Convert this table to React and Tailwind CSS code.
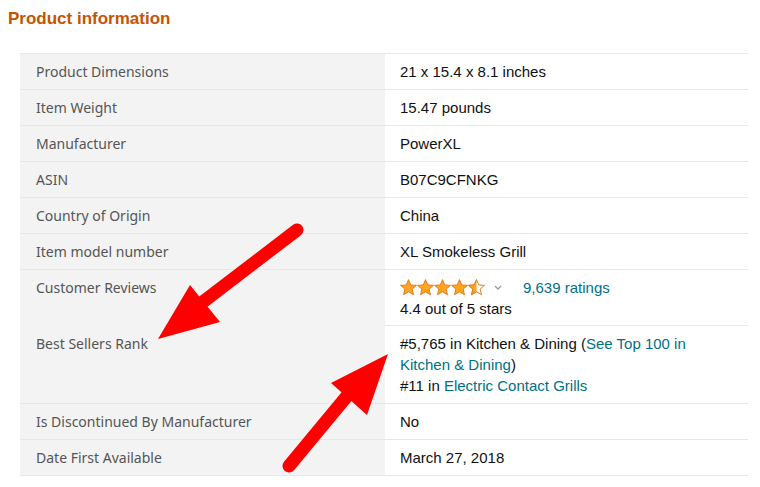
const rows = [
  ["Product Dimensions", "21 x 15.4 x 8.1 inches"],
  ["Item Weight", "15.47 pounds"],
  ["Manufacturer", "PowerXL"],
  ["ASIN", "B07C9CFNKG"],
  ["Country of Origin", "China"],
  ["Item model number", "XL Smokeless Grill"],
  ["Customer Reviews", "reviews"],
  ["Best Sellers Rank", "rank"],
  ["Is Discontinued By Manufacturer", "No"],
  ["Date First Available", "March 27, 2018"],
];

const STAR = "M8 0.6L10.1 5.6L15.5 6L11.4 9.5L12.7 14.8L8 12L3.3 14.8L4.6 9.5L0.5 6L5.9 5.6Z";

const Star = ({ half }) => (
  <svg width="17" height="17" viewBox="0 0 16 16">
    <defs>
      <clipPath id="halfclip">
        <rect x="0" y="0" width="8" height="16" />
      </clipPath>
    </defs>
    {half ? (
      <>
        <path d={STAR} fill="#fff" stroke="#de7921" strokeWidth="0.9" strokeLinejoin="round" />
        <path d={STAR} fill="#ffa41c" stroke="#de7921" strokeWidth="0.9" clipPath="url(#halfclip)" />
      </>
    ) : (
      <path d={STAR} fill="#ffa41c" stroke="#de7921" strokeWidth="0.9" strokeLinejoin="round" />
    )}
  </svg>
);

const Reviews = () => (
  <div>
    <div className="flex items-center h-[21px]">
      <div className="flex">
        <Star />
        <Star />
        <Star />
        <Star />
        <Star half />
      </div>
      <svg className="ml-[8px]" width="10" height="8" viewBox="0 0 10 8">
        <polyline points="2,2 5,5 8,2" fill="none" stroke="#999" strokeWidth="1.3" />
      </svg>
      <span className="ml-[20px] text-[#007185]">9,639 ratings</span>
    </div>
    <div>4.4 out of 5 stars</div>
  </div>
);

const Rank = () => (
  <div>
    <div>
      #5,765 in Kitchen &amp; Dining (<span className="text-[#007185]">See Top 100 in</span>
    </div>
    <div>
      <span className="text-[#007185]">Kitchen &amp; Dining</span>)
    </div>
    <div>
      #11 in <span className="text-[#007185]">Electric Contact Grills</span>
    </div>
  </div>
);

export default function App() {
  return (
    <div className="relative w-[760px] h-[487px] bg-white overflow-hidden">
      <h2 className="pl-[8px] pt-[9px] text-[17px] leading-[20px] font-bold text-[#c45500] font-['Liberation_Sans',Arial,sans-serif]">
        Product information
      </h2>

      <div className="mt-[24px] ml-[20px] w-[728px] border-t border-[#e7e7e7]">
        {rows.map(([label, value]) => (
          <div
            key={label}
            className={`grid grid-cols-[365px_1fr] border-b border-[#e7e7e7] ${
              value === "reviews" ? "h-[56px]" : ""
            }`}
          >
            <div className="bg-[#f3f3f3] pl-[16px] py-[7px] text-[14px] leading-[21px] text-[#555] font-['Noto_Sans',sans-serif]">
              {label}
            </div>
            <div className="pl-[15px] py-[7px] text-[15px] leading-[21px] text-[#0f1111] font-['Liberation_Sans',Arial,sans-serif]">
              {value === "reviews" ? <Reviews /> : value === "rank" ? <Rank /> : value}
            </div>
          </div>
        ))}
      </div>

      {/* annotation arrows */}
      <svg className="absolute left-0 top-0 pointer-events-none" width="760" height="487">
        <line x1="297" y1="230" x2="195" y2="308" stroke="#ff0000" strokeWidth="13" strokeLinecap="round" />
        <polygon points="158,339 190,285 220,322" fill="#ff0000" />
        <line x1="289" y1="466" x2="352" y2="390" stroke="#ff0000" strokeWidth="13" strokeLinecap="round" />
        <polygon points="388,354 331,383 367,415" fill="#ff0000" />
      </svg>
    </div>
  );
}
